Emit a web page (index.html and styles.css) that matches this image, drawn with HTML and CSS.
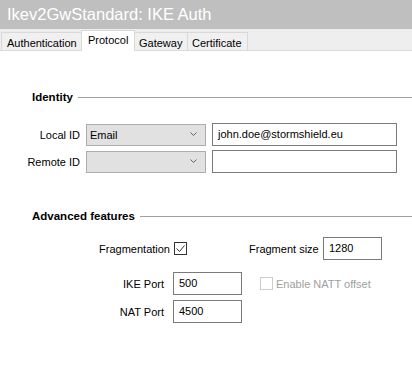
FILE: index.html
```html
<!DOCTYPE html>
<html lang="en">
<head>
  <meta charset="UTF-8">
  <title>Ikev2GwStandard: IKE Auth</title>
  <link rel="stylesheet" href="styles.css">
</head>
<body>
  <div class="titlebar">Ikev2GwStandard: IKE Auth</div>

  <div class="tabs">
    <div class="tab auth">Authentication</div>
    <div class="tab active">Protocol</div>
    <div class="tab gateway">Gateway</div>
    <div class="tab cert">Certificate</div>
  </div>

  <div class="content">
    <div class="group-title identity">
      <span>Identity</span>
      <div class="rule"></div>
    </div>

    <div class="id-row first">
      <label class="id-label">Local ID</label>
      <div class="combo">
        <span>Email</span>
        <svg width="7" height="5" viewBox="0 0 7 5"><polyline points="0.5,0.5 3.5,3.5 6.5,0.5" fill="none" stroke="#606060" stroke-width="1"/></svg>
      </div>
      <div class="textbox wide">john.doe@stormshield.eu</div>
    </div>

    <div class="id-row">
      <label class="id-label">Remote ID</label>
      <div class="combo">
        <span></span>
        <svg width="7" height="5" viewBox="0 0 7 5"><polyline points="0.5,0.5 3.5,3.5 6.5,0.5" fill="none" stroke="#606060" stroke-width="1"/></svg>
      </div>
      <div class="textbox wide"></div>
    </div>

    <div class="group-title advanced">
      <span>Advanced features</span>
      <div class="rule"></div>
    </div>

    <div class="adv-row frag">
      <label class="frag-label">Fragmentation</label>
      <div class="check">
        <svg width="11" height="11" viewBox="0 0 11 11"><polyline points="1.5,5.5 4.5,8.5 9.5,2.5" fill="none" stroke="#333" stroke-width="1"/></svg>
      </div>
      <label class="size-label">Fragment size</label>
      <div class="textbox size">1280</div>
    </div>

    <div class="adv-row port ike">
      <label class="port-label">IKE Port</label>
      <div class="textbox port-box">500</div>
      <div class="check disabled"></div>
      <span class="natt">Enable NATT offset</span>
    </div>

    <div class="adv-row port nat">
      <label class="port-label">NAT Port</label>
      <div class="textbox port-box">4500</div>
    </div>
  </div>
</body>
</html>
```

FILE: styles.css
```css
body {
  margin: 0;
  background: #fff;
  font-family: "Liberation Sans", Arial, sans-serif;
  font-size: 11px;
  color: #000;
}

.titlebar {
  height: 29px;
  line-height: 29px;
  background: #bfbfbf;
  color: #fff;
  font-size: 16.5px;
  padding-left: 7px;
  box-sizing: border-box;
}

.tabs {
  display: flex;
  align-items: flex-end;
  height: 21px;
  background: #eeeeee;
  border-bottom: 1px solid #d9d9d9;
  padding-left: 1px;
}

.tab {
  height: 18px;
  line-height: 18px;
  padding: 1px 4px 0;
  box-sizing: border-box;
  border: 1px solid #d9d9d9;
  border-bottom: none;
  margin-left: -1px;
  background: #f0f0f0;
  white-space: nowrap;
}

.tab.auth {
  margin-left: 0;
  width: 81px;
  padding-left: 5px;
}

.tab.active {
  height: 21px;
  padding: 0 6px;
  line-height: 19px;
  background: #fff;
  margin-bottom: -1px;
  width: 54px;
}

.tab.gateway {
  width: 54px;
}

.tab.cert {
  width: 61px;
}

.content {
  display: flex;
  flex-direction: column;
}

.group-title {
  display: flex;
  align-items: center;
  gap: 5px;
  margin-left: 32px;
  height: 14px;
  font-weight: bold;
  font-size: 11.5px;
}

.group-title .rule {
  flex: 1;
  height: 1px;
  background: #a0a0a0;
}

.group-title.identity {
  margin-top: 39px;
}

.group-title.advanced {
  margin-top: 36px;
}

.id-row {
  display: flex;
  align-items: center;
  height: 23px;
  margin-top: 4px;
}

.id-row.first {
  margin-top: 19px;
}

.id-label {
  width: 80px;
  text-align: right;
  margin-right: 6px;
}

.combo {
  display: flex;
  align-items: center;
  justify-content: space-between;
  width: 120px;
  height: 22px;
  box-sizing: border-box;
  background: #e1e1e1;
  border: 1px solid #adadad;
  padding: 0 8px 0 3px;
  margin-right: 6px;
}

.textbox {
  height: 23px;
  line-height: 21px;
  box-sizing: border-box;
  border: 1px solid #7a7a7a;
  background: #fff;
  padding-left: 5px;
}

.textbox.wide {
  width: 185px;
}

.adv-row {
  display: flex;
  align-items: center;
  height: 23px;
}

.adv-row.frag {
  margin-top: 14px;
}

.adv-row.ike {
  margin-top: 12px;
}

.adv-row.nat {
  margin-top: 5px;
}

.frag-label {
  width: 170px;
  text-align: right;
  margin-right: 4px;
}

.check {
  width: 13px;
  height: 13px;
  box-sizing: border-box;
  border: 1px solid #333;
  display: flex;
  align-items: center;
  justify-content: center;
}

.check.disabled {
  border-color: #cccccc;
  margin-left: 18px;
  margin-right: 3px;
}

.size-label {
  margin-left: 62px;
  width: 74px;
}

.textbox.size {
  width: 59px;
}

.port-label {
  width: 164px;
  text-align: right;
  margin-right: 9px;
}

.textbox.port-box {
  width: 69px;
}

.natt {
  color: #a0a0a0;
}
```
